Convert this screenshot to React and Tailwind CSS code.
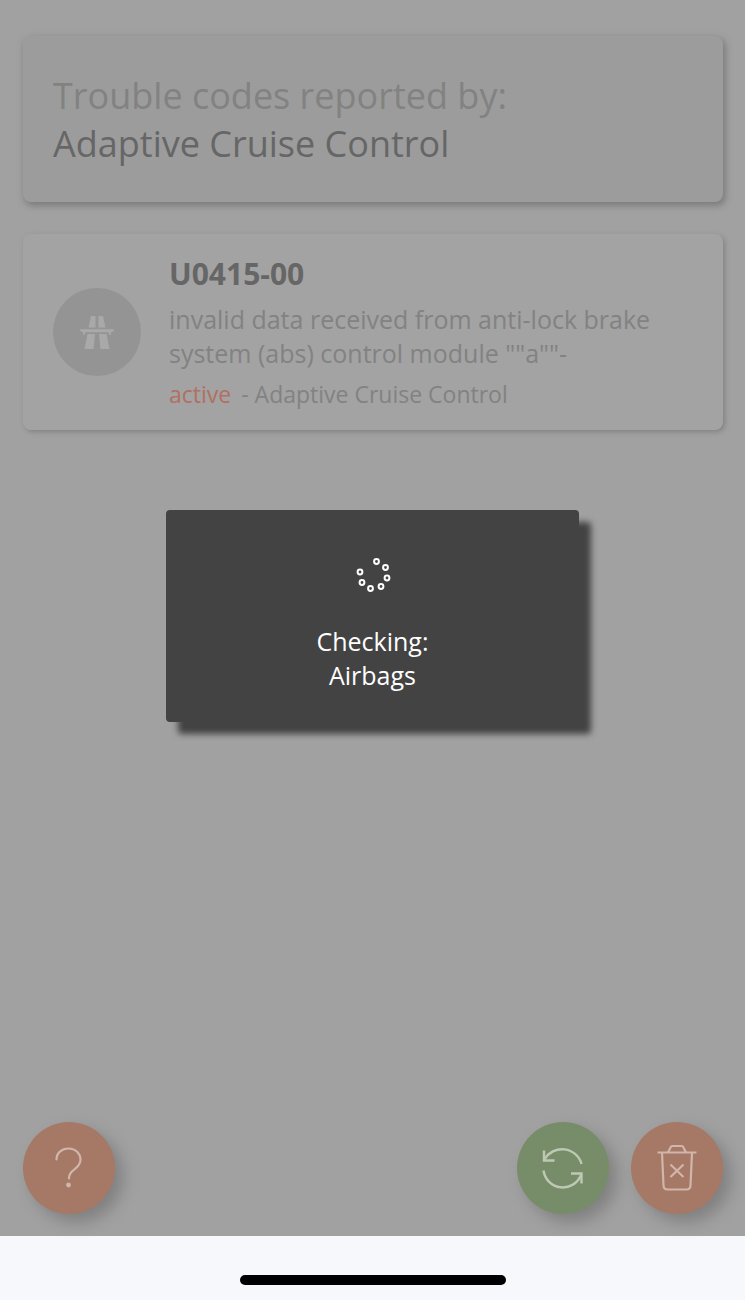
const codes = [
  {
    code: 'U0415-00',
    text: 'invalid data received from anti-lock brake system (abs) control module ""a""-',
    status: 'active',
    module: 'Adaptive Cruise Control',
  },
]

function RoadIcon() {
  return (
    <svg className="h-9 w-9" viewBox="0 0 36 36" fill="#a9a9a9" aria-hidden="true">
      <path d="M12 2h4.500v11.500h-7z M19.500 2h4.500l2.500 11.500h-7z" />
      <path d="M0.500 15.300h35l-1 2-2.500 1v2.500h-2v-2.500H6v2.500H4v-2.500l-2.500-1z" />
      <path d="M8.500 20h7.500l-1.500 15H5.500z M20 20h7.500l3 15h-9z" />
    </svg>
  )
}

function HelpIcon() {
  return (
    <svg className="h-12 w-12" viewBox="0 0 48 48" fill="none" stroke="#d0b6ab" strokeWidth="2.200" strokeLinecap="round" aria-hidden="true">
      <path d="M11.500 15.500C11.500 9 16.500 4.500 23.500 4.500s12 5 12 11.300c0 5-3 7.200-6 9.500-3.500 2.500-5.500 4.400-5.500 8.500v.7" />
      <circle cx="23.500" cy="41" r="1.300" fill="#d0b6ab" />
    </svg>
  )
}

function RefreshIcon() {
  return (
    <svg className="h-12 w-12" viewBox="0 0 48 48" fill="none" stroke="#bdc9b3" strokeWidth="2.400" aria-hidden="true">
      <path d="M5.500 15.500A20 19.500 0 0 1 42.500 20" />
      <path d="M5 6.500v10h10.500" />
      <path d="M4.500 26.500A19.500 19.500 0 0 0 42 31" />
      <path d="M32 29.500H42.500V39.500" />
    </svg>
  )
}

function TrashIcon() {
  return (
    <svg className="h-12 w-12" viewBox="0 0 48 48" fill="none" stroke="#d0b6ab" strokeWidth="2.200" strokeLinejoin="round" aria-hidden="true">
      <path d="M4.500 8.500h39" />
      <path d="M15 8.500l2.500-5q.6-1.500 2-1.500h9q1.400 0 2 1.500l2.500 5" />
      <path d="M9 8.500l1.500 33q.2 4 4 4h19q3.800 0 4-4l1.500-33" />
      <path d="M17.500 20.500l13 12.500M30.500 20.500l-13 12.500" />
    </svg>
  )
}

function Spinner() {
  const dots = [
    [35.5, 19.5], [44.5, 25.5], [46, 36], [40, 44.500], [29.500, 46.500], [21, 40.500], [19, 30],
  ]
  return (
    <svg className="h-16 w-16" viewBox="0 0 64 64" fill="none" stroke="#ffffff" strokeWidth="2" aria-hidden="true">
      {dots.map(([x, y]) => (
        <circle key={`${x}-${y}`} cx={x} cy={y} r="2.400" />
      ))}
    </svg>
  )
}

export default function App() {
  return (
    <div className="flex min-h-screen flex-col bg-[#f7f8fb] font-['Open_Sans',sans-serif]">
      <div className="relative flex flex-1 flex-col bg-[#a1a1a1]">
        <main className="flex flex-1 flex-col gap-8 pt-9 pr-[22px] pl-[23px]">
          {/* Header */}
          <header className="rounded-lg bg-[#9c9c9c] px-[30px] pt-9 pb-[34px] text-4xl leading-12 shadow-[2px_3px_6px_1px_#7e7e7e]">
            <p className="text-[#828282]">Trouble codes reported by:</p>
            <h1 className="text-[#666666]">Adaptive Cruise Control</h1>
          </header>

          {/* Codes */}
          {codes.map((c) => (
            <article key={c.code} className="flex items-center gap-7 rounded-lg bg-[#a3a3a3] px-[30px] py-4 shadow-[2px_2px_5px_#838383]">
              <div className="flex h-22 w-22 shrink-0 items-center justify-center rounded-full bg-[#949494]">
                <RoadIcon />
              </div>
              <div className="flex-1 pt-1">
                <h2 className="text-3xl leading-10 font-bold text-[#666666]">{c.code}</h2>
                <p className="mt-2 text-[25px] leading-[34px] text-[#828282]">{c.text}</p>
                <p className="mt-1 text-[23px] leading-10 text-[#828282]">
                  <span className="mr-1 text-[#b07062]">{c.status}</span>
                  {' '}- {c.module}
                </p>
              </div>
            </article>
          ))}
        </main>

        <footer className="flex gap-[22px] pr-[22px] pb-[22px] pl-[23px]">
          <button aria-label="Help" className="mr-auto flex h-23 w-23 items-center justify-center rounded-full bg-[#a67866] shadow-[8px_8px_16px_#808080]">
            <HelpIcon />
          </button>
          <button aria-label="Refresh" className="flex h-23 w-23 items-center justify-center rounded-full bg-[#778c69] shadow-[8px_8px_16px_#808080]">
            <RefreshIcon />
          </button>
          <button aria-label="Delete codes" className="flex h-23 w-23 items-center justify-center rounded-full bg-[#a67866] shadow-[8px_8px_16px_#808080]">
            <TrashIcon />
          </button>
        </footer>

        {/* Progress dialog */}
        <div className="absolute inset-0 flex items-center justify-center pb-1">
          <div role="status" className="flex w-5/9 flex-col items-center rounded-sm bg-[#434343] px-6 pt-8 pb-[30px] text-center text-[25px] leading-[34px] text-white shadow-[12px_12px_6px_#434343]">
            <Spinner />
            <p className="mt-[18px]">Checking:</p>
            <p>Airbags</p>
          </div>
        </div>
      </div>

      {/* Home indicator */}
      <div className="flex h-16 items-center justify-center pt-6">
        <div className="h-2.5 w-[266px] rounded-full bg-black" />
      </div>
    </div>
  )
}
